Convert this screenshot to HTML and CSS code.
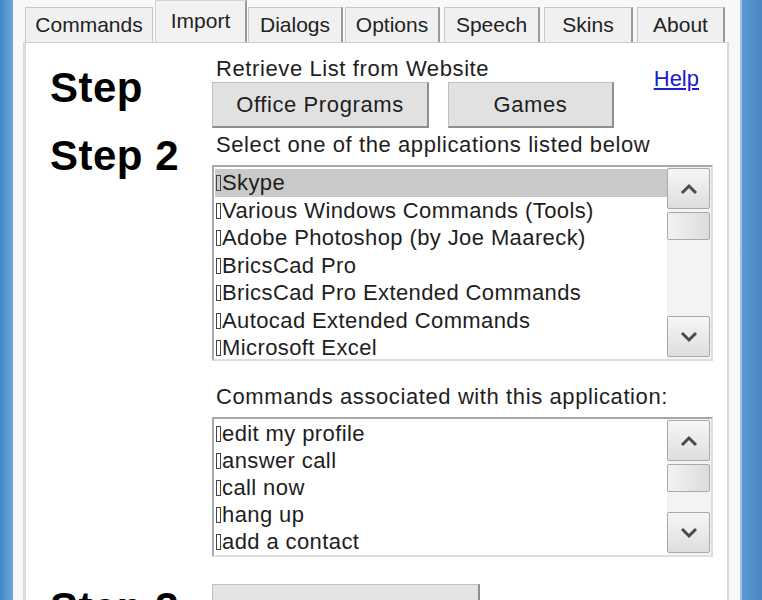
FILE: index.html
```html
<!DOCTYPE html>
<html>
  <head>
    <title>Import</title>
    <meta charset="utf-8"/>
    <link rel="stylesheet" href="styles.css">
  </head>
  <body>
    <div class="desk-left"></div>

    <div class="frame">
      <div class="tabs">
        <div class="tab tab-commands">Commands</div>
        <div class="tab tab-import active">Import</div>
        <div class="tab tab-dialogs">Dialogs</div>
        <div class="tab tab-options">Options</div>
        <div class="tab tab-speech">Speech</div>
        <div class="tab tab-skins">Skins</div>
        <div class="tab tab-about">About</div>
      </div>

      <div class="panel">
        <div class="step step-1">Step</div>
        <div class="retrieve">
          <div class="retrieve-left">
            <div class="label">Retrieve List from Website</div>
            <div class="buttons">
              <button class="btn btn-office">Office Programs</button>
              <button class="btn btn-games">Games</button>
            </div>
          </div>
          <a class="help" href="#">Help</a>
        </div>

        <div class="step step-2">Step 2</div>
        <div class="lists">
          <div class="label">Select one of the applications listed below</div>
          <div class="listbox apps">
            <ul class="items">
              <li class="selected"><i class="box"></i>Skype</li>
              <li><i class="box"></i>Various Windows Commands (Tools)</li>
              <li><i class="box"></i>Adobe Photoshop (by Joe Maareck)</li>
              <li><i class="box"></i>BricsCad Pro</li>
              <li><i class="box"></i>BricsCad Pro Extended Commands</li>
              <li><i class="box"></i>Autocad Extended Commands</li>
              <li><i class="box"></i>Microsoft Excel</li>
            </ul>
            <div class="scrollbar">
              <div class="sb-btn">
                <svg width="20" height="12" viewBox="0 0 20 12"><polyline points="3,10 10,3 17,10" fill="none" stroke="#4a4a4a" stroke-width="3"/></svg>
              </div>
              <div class="sb-thumb"></div>
              <div class="sb-track"></div>
              <div class="sb-btn">
                <svg width="20" height="12" viewBox="0 0 20 12"><polyline points="3,2 10,9 17,2" fill="none" stroke="#4a4a4a" stroke-width="3"/></svg>
              </div>
            </div>
          </div>

          <div class="label label-commands">Commands associated with this application:</div>
          <div class="listbox commands">
            <ul class="items">
              <li><i class="box"></i>edit my profile</li>
              <li><i class="box"></i>answer call</li>
              <li><i class="box"></i>call now</li>
              <li><i class="box"></i>hang up</li>
              <li><i class="box"></i>add a contact</li>
            </ul>
            <div class="scrollbar">
              <div class="sb-btn">
                <svg width="20" height="12" viewBox="0 0 20 12"><polyline points="3,10 10,3 17,10" fill="none" stroke="#4a4a4a" stroke-width="3"/></svg>
              </div>
              <div class="sb-thumb"></div>
              <div class="sb-track"></div>
              <div class="sb-btn">
                <svg width="20" height="12" viewBox="0 0 20 12"><polyline points="3,2 10,9 17,2" fill="none" stroke="#4a4a4a" stroke-width="3"/></svg>
              </div>
            </div>
          </div>
        </div>

        <div class="step step-3">Step 3</div>
        <div class="import-row">
          <button class="btn btn-import"></button>
        </div>
      </div>
    </div>

    <div class="desk-right"></div>
  </body>
</html>
```

FILE: styles.css
```css
html, body {
  width: 762px;
  height: 600px;
  margin: 0;
  overflow: hidden;
}
body {
  display: flex;
  background: #fff;
  font-family: "Liberation Sans", Arial, sans-serif;
  font-size: 22px;
  color: #1e1e1e;
}

.desk-left {
  width: 13px;
  flex: none;
  background: linear-gradient(to right, #3f86c8, #6fa9dc);
}
.desk-right {
  width: 20px;
  flex: none;
  background: linear-gradient(to right, #5d9ad3, #4a86c2);
  border-left: 2px solid #9fc2e3;
}

.frame {
  flex: 1;
  display: flex;
  flex-direction: column;
  background: #f6f8f9;
  padding: 0 11px 0 10px;
  overflow: hidden;
}

/* tab strip */
.tabs {
  display: flex;
  align-items: flex-end;
  height: 42px;
  flex: none;
  padding-left: 2px;
}
.tab {
  box-sizing: border-box;
  height: 35px;
  line-height: 34px;
  text-align: center;
  font-size: 21px;
  background: #f0f0f0;
  border: 1px solid #c8c8c8;
  border-bottom: none;
  color: #222;
}
.tab.active {
  height: 42px;
  line-height: 40px;
  background: #f2f2f2;
  border-color: #d4d4d4;
  border-right: 2px solid #9a9a9a;
}
.tab-commands { width: 128px; margin-right: 2px; }
.tab-import { width: 92px; margin-right: 1px; }
.tab-dialogs { width: 95px; margin-right: 2px; border-right: 2px solid #9a9a9a; }
.tab-options { width: 95px; margin-right: 4px; border-right: 2px solid #9a9a9a; }
.tab-speech { width: 96px; margin-right: 4px; border-right: 2px solid #9a9a9a; }
.tab-skins { width: 89px; margin-right: 4px; border-right: 2px solid #9a9a9a; }
.tab-about { width: 88px; border-right: 2px solid #9a9a9a; }

/* panel */
.panel {
  flex: 1;
  background: #fff;
  border: 1px solid #cfcfcf;
  border-left: 3px solid #dcdcdc;
  border-right: 2px solid #d8d8d8;
  display: grid;
  grid-template-columns: 186px 501px;
  grid-template-rows: 86px 447px auto;
}

.step {
  font-weight: bold;
  font-size: 42px;
  letter-spacing: 0.5px;
  color: #000;
  padding-left: 24px;
}
.step-1 { padding-top: 21px; }
.step-2 { padding-top: 3px; }
.step-3 { padding-top: 8px; }

.label {
  line-height: 26px;
  padding-left: 4px;
  letter-spacing: 0.6px;
}

.retrieve {
  display: flex;
  padding-top: 13px;
}
.buttons {
  display: flex;
  gap: 19px;
}
.btn {
  font-family: inherit;
  font-size: 22px;
  letter-spacing: 0.6px;
  color: #1e1e1e;
  height: 46px;
  background: #e1e1e1;
  border: 1px solid #bfbfbf;
  border-right: 2px solid #8f8f8f;
  border-bottom: 2px solid #8f8f8f;
  padding: 0;
}
.btn-office { width: 217px; }
.btn-games { width: 166px; }
.help {
  margin-left: auto;
  margin-right: 14px;
  margin-top: 10px;
  color: #1a1ad0;
  font-size: 22px;
  height: 26px;
}

.lists { padding-top: 3px; }
.label-commands { margin-top: 23px; }

.listbox {
  display: flex;
  border: 2px solid #a8a8a8;
  border-right-color: #dedede;
  border-bottom-color: #dedede;
  margin-top: 7px;
  background: #fff;
}
.apps { height: 192px; }
.commands { height: 136px; }

.items {
  flex: 1;
  list-style: none;
  margin: 0;
  padding: 2px 0 0 1px;
  overflow: hidden;
}
.commands .items { padding-top: 1px; }
.items li {
  height: 27.5px;
  line-height: 28px;
  white-space: nowrap;
  letter-spacing: 0.4px;
}
.commands .items li { height: 27px; line-height: 27px; }
.items li.selected { background: #c9c9c9; }
.box {
  display: inline-block;
  width: 3px;
  height: 14px;
  border: 1px solid #444;
  margin: 0 1px 0 1px;
  vertical-align: -1px;
}

.scrollbar {
  width: 43px;
  flex: none;
  display: flex;
  flex-direction: column;
  padding: 1px 1px 2px 0;
  background: #f3f3f3;
}
.sb-btn, .sb-thumb {
  border: 1px solid #a9a9a9;
  border-radius: 2px;
  background: linear-gradient(to bottom, #f6f6f6, #dedede);
}
.sb-btn {
  height: 39px;
  display: flex;
  align-items: center;
  justify-content: center;
}
.sb-thumb {
  height: 26px;
  margin-top: 3px;
  background: linear-gradient(to right, #f2f2f2, #dcdcdc);
}
.sb-track { flex: 1; }

.import-row { padding-top: 8px; }
.btn-import {
  width: 268px;
  background: #e4e4e4;
}
```
